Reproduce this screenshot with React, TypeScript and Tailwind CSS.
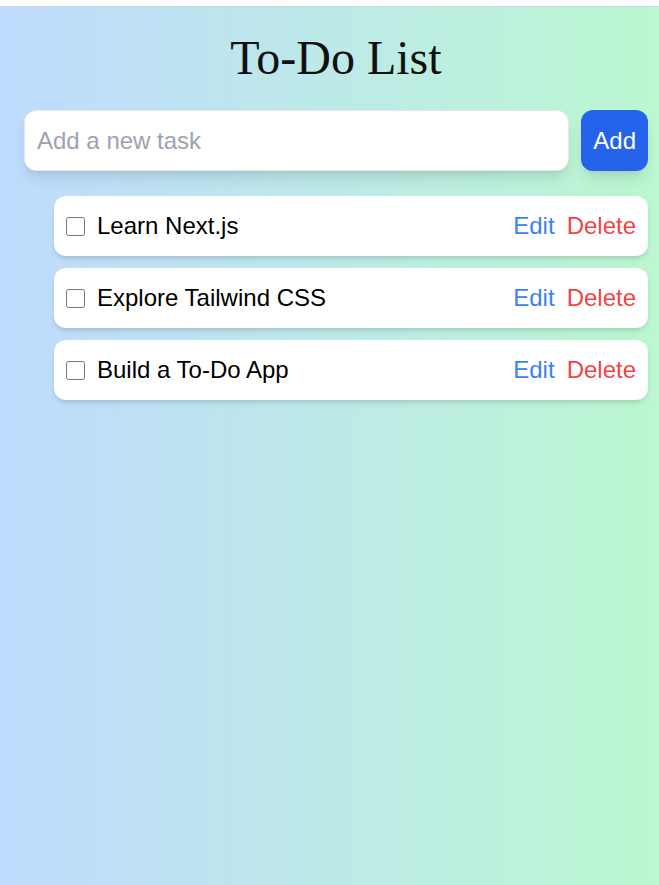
import React, { useState } from 'react';

type Task = {
  id: number;
  text: string;
  done: boolean;
};

const initialTasks: Task[] = [
  { id: 1, text: 'Learn Next.js', done: false },
  { id: 2, text: 'Explore Tailwind CSS', done: false },
  { id: 3, text: 'Build a To-Do App', done: false },
];

const App: React.FC = () => {
  const [tasks, setTasks] = useState<Task[]>(initialTasks);
  const [input, setInput] = useState('');

  const addTask = () => {
    if (!input.trim()) return;
    setTasks(prev => [...prev, { id: Date.now(), text: input.trim(), done: false }]);
    setInput('');
  };

  const toggleTask = (id: number) => {
    setTasks(prev => prev.map(t => (t.id === id ? { ...t, done: !t.done } : t)));
  };

  const editTask = (id: number) => {
    const current = tasks.find(t => t.id === id);
    const text = window.prompt('Edit task', current?.text ?? '');
    if (text) setTasks(prev => prev.map(t => (t.id === id ? { ...t, text } : t)));
  };

  const deleteTask = (id: number) => {
    setTasks(prev => prev.filter(t => t.id !== id));
  };

  return (
    <div className="min-h-screen flex flex-col font-['Liberation_Sans',Arial,sans-serif]">
      {/* top bar */}
      <div className="h-[7px] bg-white border-b border-gray-300" />

      <main className="flex-1 bg-gradient-to-r from-[#bfdbfe] to-[#bbf7d0] pl-6 pr-[11px] pt-[27px]">
        <h1 className="text-center text-5xl leading-[48px] text-[#111111] font-['Liberation_Serif',Georgia,serif]">
          To-Do List
        </h1>

        {/* new task */}
        <div className="flex gap-3 mt-7">
          <input
            type="text"
            value={input}
            onChange={e => setInput(e.target.value)}
            onKeyDown={e => e.key === 'Enter' && addTask()}
            placeholder="Add a new task"
            className="flex-1 h-[61px] px-3 text-2xl bg-white border border-gray-200 rounded-xl shadow-lg placeholder:text-[#9ca3af] focus:outline-none"
          />
          <button
            onClick={addTask}
            className="h-[61px] px-3 text-2xl text-white bg-[#2563eb] rounded-xl shadow-lg"
          >
            Add
          </button>
        </div>

        {/* task list */}
        <ul className="mt-[25px] ml-[30px] space-y-3">
          {tasks.map(task => (
            <li
              key={task.id}
              className="h-[60px] px-3 flex items-center justify-between bg-white rounded-xl shadow-md"
            >
              <label className="flex items-center gap-3">
                <input
                  type="checkbox"
                  checked={task.done}
                  onChange={() => toggleTask(task.id)}
                  className="w-[19px] h-[19px] m-0"
                />
                <span className={`text-2xl ${task.done ? 'line-through text-gray-400' : 'text-black'}`}>
                  {task.text}
                </span>
              </label>
              <div className="flex items-center gap-3 text-2xl">
                <button onClick={() => editTask(task.id)} className="text-[#3b82f6]">
                  Edit
                </button>
                <button onClick={() => deleteTask(task.id)} className="text-[#ef4444]">
                  Delete
                </button>
              </div>
            </li>
          ))}
        </ul>
      </main>
    </div>
  );
};

export default App;
